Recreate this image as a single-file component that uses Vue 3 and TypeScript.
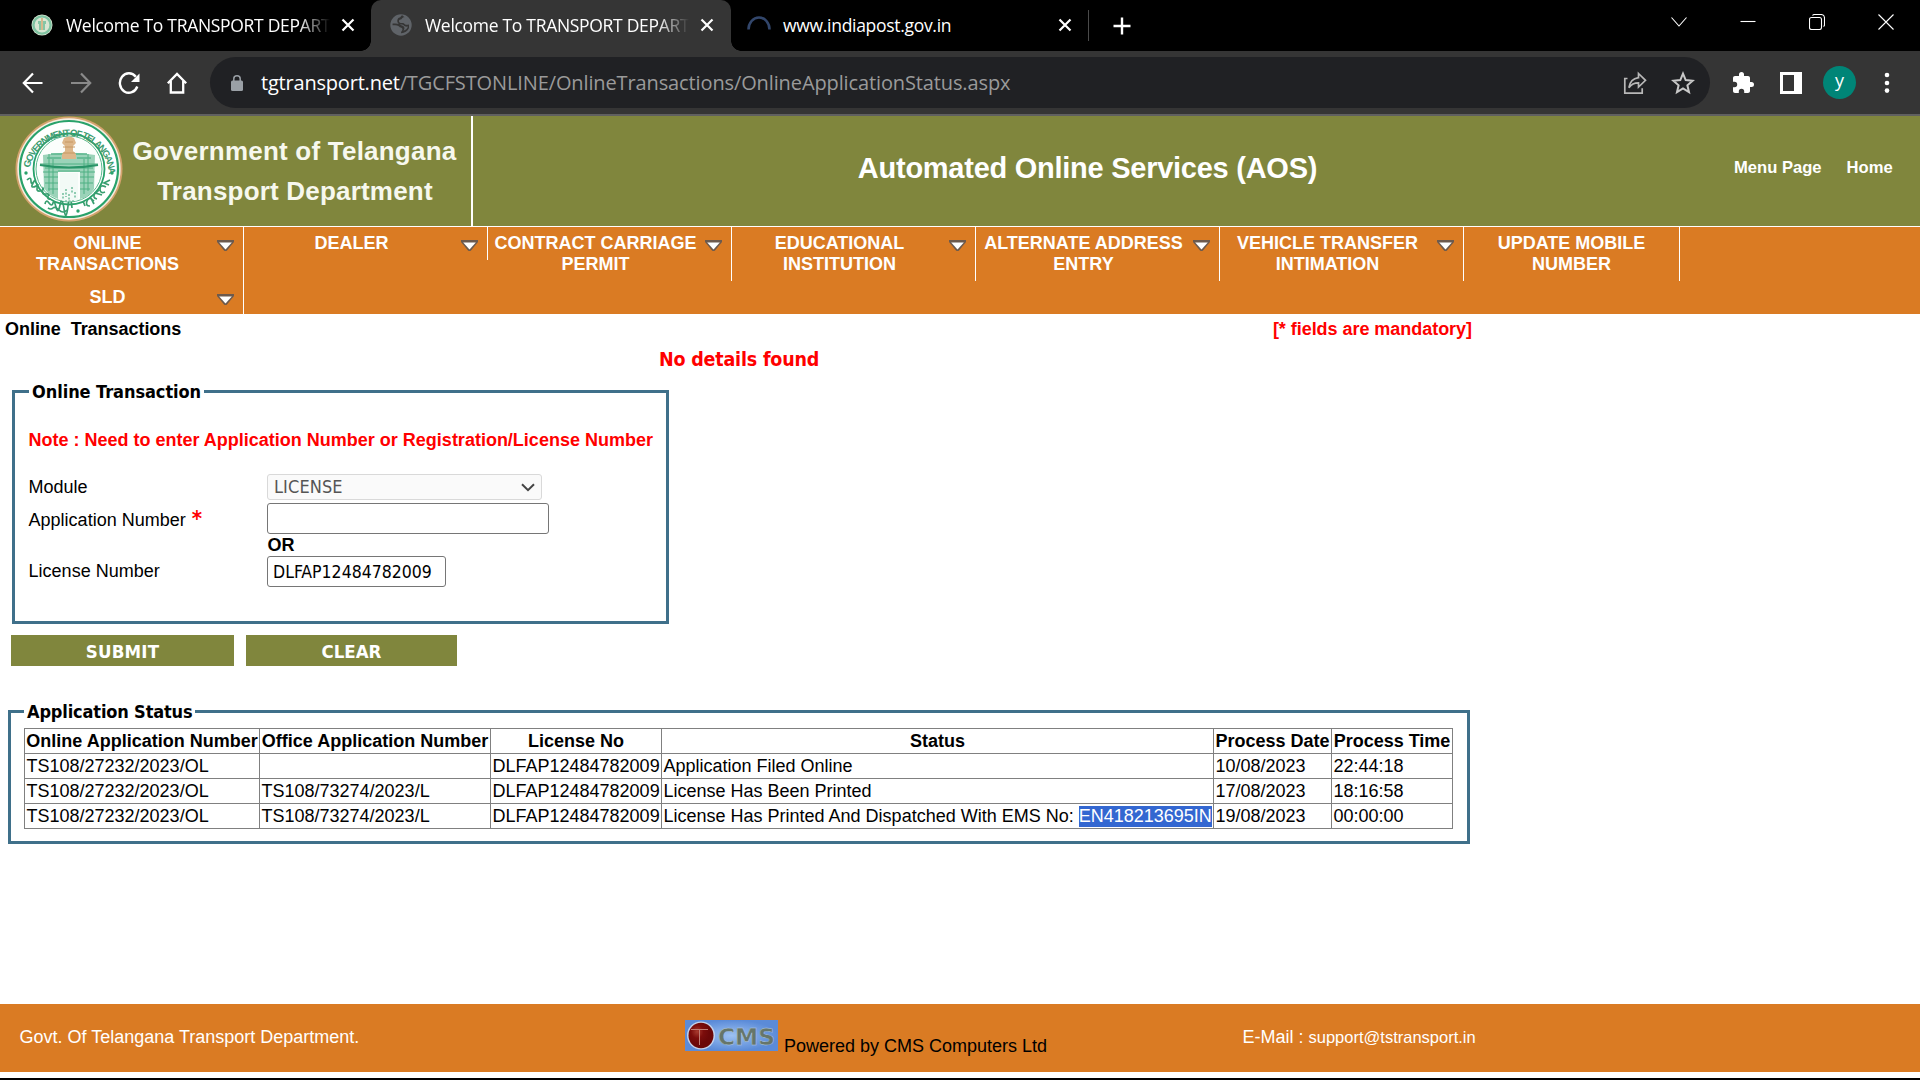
<script setup lang="ts">
import { ref } from 'vue'

interface MenuItem {
  lines: string[]
  arrow: boolean
  short?: boolean
}

interface StatusRow {
  online: string
  office: string
  license: string
  status: string
  marked?: string
  date: string
  time: string
}

const menuColumns: MenuItem[][] = [
  [
    { lines: ['ONLINE', 'TRANSACTIONS'], arrow: true },
    { lines: ['SLD'], arrow: true, short: true },
  ],
  [{ lines: ['DEALER'], arrow: true, short: true }],
  [{ lines: ['CONTRACT CARRIAGE', 'PERMIT'], arrow: true }],
  [{ lines: ['EDUCATIONAL', 'INSTITUTION'], arrow: true }],
  [{ lines: ['ALTERNATE ADDRESS', 'ENTRY'], arrow: true }],
  [{ lines: ['VEHICLE TRANSFER', 'INTIMATION'], arrow: true }],
  [{ lines: ['UPDATE MOBILE', 'NUMBER'], arrow: false }],
]

const headings = [
  'Online Application Number',
  'Office Application Number',
  'License No',
  'Status',
  'Process Date',
  'Process Time',
]

const rows: StatusRow[] = [
  { online: 'TS108/27232/2023/OL', office: '', license: 'DLFAP12484782009', status: 'Application Filed Online', date: '10/08/2023', time: '22:44:18' },
  { online: 'TS108/27232/2023/OL', office: 'TS108/73274/2023/L', license: 'DLFAP12484782009', status: 'License Has Been Printed', date: '17/08/2023', time: '18:16:58' },
  { online: 'TS108/27232/2023/OL', office: 'TS108/73274/2023/L', license: 'DLFAP12484782009', status: 'License Has Printed And Dispatched With EMS No: ', marked: 'EN418213695IN', date: '19/08/2023', time: '00:00:00' },
]

const applicationNumber = ref('')
const licenseNumber = ref('DLFAP12484782009')
</script>

<template>
  <div class="screen">
    <header class="tabs">
      <div class="tab tab-first">
        <svg class="fav" viewBox="0 0 22 22">
          <circle cx="11" cy="11" r="10.5" fill="#d9e6d2" />
          <circle cx="11" cy="11" r="8.6" fill="none" stroke="#7fc3a2" stroke-width="2.4" />
          <path d="M7 7h8v3H7zM8 10h6v6H8z" fill="#84c6a5" />
          <path d="M11 4v12" stroke="#d6b98c" stroke-width="2" />
        </svg>
        <span class="tab-title faded">Welcome To TRANSPORT DEPART</span>
        <svg class="x" viewBox="0 0 14 14"><path d="M1.5 1.5l11 11M12.5 1.5l-11 11" /></svg>
      </div>
      <div class="tab tab-active">
        <svg class="fav" viewBox="0 0 22 22">
          <circle cx="11" cy="11" r="10.7" fill="#5f6368" />
          <path d="M14.500 3.200c-2.600 0-2.200 2.200-4.200 2.400-1.800.2-1.800 2.600-.3 3.200 1.800.6 3.400-.6 4.400 1 .8 1.400 2.600 1.200 4.600.6v3.600c-1.600 3.400-4 5.200-8 5.200-.4-1.800 2-2.600 1.400-4.400-.6-1.600-2.600-.8-3.400-2.200-.6-1.200-2.800-1.400-6.400-1.400-.2-2 .2-1.600.2-1.600 3.600 0 6 .2 7.400 1.200 1.200 1 3.800.8 4.200 3 .2 1.400-.6 2.200-1 3 2.400-.6 3.800-2.200 4.600-4.200-2.400.2-3.800-.4-4.600-1.600-1.200-.8-4 .2-5.400-1.800-1.400-2.200-.6-5 1.600-5.600 1.200-.4 1.200-1.800 2.600-2.400z" fill="#353535" />
        </svg>
        <span class="tab-title faded">Welcome To TRANSPORT DEPART</span>
        <svg class="x" viewBox="0 0 14 14"><path d="M1.5 1.5l11 11M12.5 1.5l-11 11" /></svg>
      </div>
      <div class="tab tab-last">
        <svg class="spinner" viewBox="0 0 24 24"><path d="M1.500 15.500a10.500 12 0 0 1 21 0" fill="none" stroke="#32466b" stroke-width="2.600" /></svg>
        <span class="tab-title host">www.indiapost.gov.in</span>
        <svg class="x" viewBox="0 0 14 14"><path d="M1.5 1.5l11 11M12.5 1.5l-11 11" /></svg>
      </div>
      <i class="tab-sep"></i>
      <svg class="plus" viewBox="0 0 18 18"><path d="M9 0.500v17M0.500 9h17" stroke="#fff" stroke-width="2.400" /></svg>
      <div class="win">
        <svg viewBox="0 0 16 16"><path d="M.5 3.500l7.500 8.500 7.500-8.500" /></svg>
        <svg viewBox="0 0 16 16"><path d="M.5 7.500h15" /></svg>
        <svg viewBox="0 0 16 16"><rect x=".5" y="3.500" width="12" height="12" rx="2" /><path d="M3.500 1.500q.5-1 2-1h6.500q3.500 0 3.500 3.500v7q0 1-1 1.500" /></svg>
        <svg viewBox="0 0 16 16"><path d="M.5.5l15 15M15.500.5l-15 15" /></svg>
      </div>
    </header>

    <div class="toolbar">
      <svg class="nav" viewBox="0 0 24 24"><path d="M21.500 12H3M12 2.500L2.800 12l9.200 9.500" fill="none" stroke="#fff" stroke-width="2.200" /></svg>
      <svg class="nav" viewBox="0 0 24 24"><path d="M2 12h18.500M12 2.500l9.200 9.500-9.200 9.500" fill="none" stroke="#8a8a8a" stroke-width="2.200" /></svg>
      <svg class="nav" viewBox="0 0 24 24"><path d="M20.300 15.500A9 9.800 0 1 1 18.800 5.700" fill="none" stroke="#fff" stroke-width="2.400" /><path d="M22.500 2.500v8.500h-8.500z" fill="#fff" /></svg>
      <svg class="nav" viewBox="0 0 24 24"><path d="M2.800 12.200L12 3l9.200 9.200M5.800 10v11.500h12.400V10" fill="none" stroke="#fff" stroke-width="2.300" /></svg>
      <div class="omnibox">
        <svg class="lock" viewBox="0 0 12 16"><rect x="0" y="5.500" width="12" height="10.500" rx="1.500" fill="#9aa0a6" /><path d="M2.800 6V3.800a3.200 3 0 0 1 6.400 0V6" fill="none" stroke="#9aa0a6" stroke-width="1.500" /></svg>
        <span class="url"><b>tgtransport.net</b>/TGCFSTONLINE/OnlineTransactions/OnlineApplicationStatus.aspx</span>
        <svg class="share" viewBox="0 0 24 24"><path d="M4.500 7.500H1.800v14.700h17.400v-5" fill="none" stroke="#b8b8b8" stroke-width="1.700" /><path d="M15.500 2.500l7 6.800-7 6.800v-4.200c-4.300 0-7.200 1.400-9.600 4.800 .8-5.300 4-9.200 9.600-10z" fill="none" stroke="#b8b8b8" stroke-width="1.700" /></svg>
        <svg class="star" viewBox="0 0 24 24"><path d="M12 2.600l2.700 6.500 7 .6-5.300 4.600 1.600 6.900L12 17.500l-6 3.700 1.600-6.900L2.300 9.700l7-.6z" fill="none" stroke="#c8c8c8" stroke-width="2" /></svg>
      </div>
      <svg class="ext puzzle" viewBox="0 0 24 24"><path fill="#fff" d="M20.500 11H19V7c0-1.100-.9-2-2-2h-4V3.500a2.500 2.500 0 0 0-5 0V5H4c-1.100 0-2 .9-2 2v3.800h1.500a2.700 2.700 0 0 1 0 5.400H2V20c0 1.100.9 2 2 2h3.800v-1.500a2.700 2.700 0 0 1 5.400 0V22H17c1.100 0 2-.9 2-2v-4h1.500a2.500 2.500 0 0 0 0-5z" /></svg>
      <svg class="ext panel" viewBox="0 0 22 22"><path fill="#fff" fill-rule="evenodd" d="M0 0h22v22H0zM3 3v16h11V3z" /></svg>
      <span class="avatar">y</span>
      <svg class="dots" viewBox="0 0 6 22"><circle cx="3" cy="3" r="2.300" /><circle cx="3" cy="11" r="2.300" /><circle cx="3" cy="18.600" r="2.300" /></svg>
    </div>

    <div class="banner">
      <div class="brand">
        <svg class="emblem" viewBox="0 0 108 106">
          <defs><path id="arc" d="M14 60a40 40 0 1 1 80 0" /></defs>
          <ellipse cx="54" cy="53" rx="53.500" ry="52.500" fill="#d4a26d" />
          <ellipse cx="54" cy="53" rx="51.700" ry="50.700" fill="#f5efe2" />
          <ellipse cx="54" cy="53" rx="49" ry="48" fill="#fff" stroke="#29a26b" stroke-width="2.200" />
          <circle cx="54" cy="53" r="35.500" fill="#fff" stroke="#29a26b" stroke-width="1.800" />
          <circle cx="54" cy="53" r="33" fill="#fbfefc" stroke="#5cba8f" stroke-width="1" />
          <text class="ring"><textPath href="#arc" textLength="116" startOffset="8">GOVERNMENT OF TELANGANA</textPath></text>
          <circle cx="11" cy="57" r="1.700" fill="#29a26b" /><circle cx="97" cy="57" r="1.700" fill="#29a26b" /><circle cx="63" cy="95" r="1.700" fill="#29a26b" />
          <g fill="none" stroke="#389e70" stroke-width="1.700">
            <path d="M12 64q4-4 4 1t4-1q-5 7-2 7t5-3q-3 8 2 7t3-3q-2 7 3 6t2 2q-1 4 3 3M30 88q1-5 4-1t4 0 3 4 4-2 4 4 4-3 4 2M33 92q3 2 5 0t6 2 8 0" />
            <path d="M95 64l-6 3 5 2M91 71q-6-3-6 2t5 3M87 79l-7-2q-3 5 2 6M79 85q-5-5-7 0t3 5M70 90l-2-5M84 74l-3 3M76 82l3 6" />
          </g>
          <path d="M28 39q26-5 52 0l-1 34q-6 9-14 10V56H43v27q-9-3-14-11z" fill="#9bd3b9" />
          <path d="M25 48h58M30 52h48M28 56h15M65 56h15M29 61h14M65 61h14M30 67h13M65 67h13M33 73h10M65 73h10M34 38v37M38 43v35M73 38v37M69 43v35M43 55h22" stroke="#4fb083" stroke-width="1" fill="none" />
          <path d="M25 49q29 5 58 0" stroke="#2a9468" stroke-width="2.200" fill="none" />
          <path d="M36 38h12M60 38h12M32 42h14M62 42h14" stroke="#5bb78d" stroke-width="1.500" fill="none" />
          <path d="M45 57h18v27q-9 3-18 0z" fill="#f2faf6" />
          <path d="M48 77v6M51 73v8M54 78v7M57 71v7M60 76v7M50 85h10" stroke="#4fae85" stroke-width="1.200" stroke-dasharray="2 1.500" />
          <path d="M49 22q5-3 10 0l2 5-3 3v5l3 3v5H47v-5l3-3v-5l-3-3z" fill="#ddb78a" />
          <path d="M48 31h12M48 37h12M50 26h8" stroke="#c69863" stroke-width="1" />
        </svg>
        <div class="brand-text">
          <span class="b1">Government of Telangana</span>
          <span class="b2">Transport Department</span>
        </div>
      </div>
      <h1>Automated Online Services (AOS)</h1>
      <nav class="links"><a>Menu Page</a><a>Home</a></nav>
    </div>

    <nav class="menu">
      <div v-for="(column, c) in menuColumns" :key="c" class="menu-col" :class="{ last: c === 6 }">
        <div v-for="item in column" :key="item.lines[0]" class="menu-item" :class="{ short: item.short }">
          <span class="menu-label"><span v-for="line in item.lines" :key="line">{{ line }}</span></span>
          <svg v-if="item.arrow" class="arrow" viewBox="0 0 17 11">
            <path d="M0 0h17v2l-7 8.500q-1.500 1-3 0L0 2z" fill="#6d5a4d" />
            <path d="M2.200 2.600h12.600L8.500 9.600z" fill="#fff" />
          </svg>
        </div>
      </div>
    </nav>

    <main>
      <div class="crumb"><b>Online&nbsp; Transactions</b><b class="red">[* fields are mandatory]</b></div>
      <div class="message">No details found</div>

      <fieldset class="form">
        <legend>Online Transaction</legend>
        <p class="note">Note : Need to enter Application Number or Registration/License Number</p>
        <div class="row module">
          <label>Module</label>
          <div class="select"><span>LICENSE</span><svg viewBox="0 0 14 9"><path d="M1 1.200l6 6 6-6" /></svg></div>
        </div>
        <div class="row app">
          <label>Application Number <b class="req">*</b></label>
          <input v-model="applicationNumber" class="wide" type="text" />
        </div>
        <div class="row or"><span></span><b>OR</b></div>
        <div class="row lic">
          <label>License Number</label>
          <input v-model="licenseNumber" class="narrow" type="text" />
        </div>
      </fieldset>

      <div class="actions"><button class="submit">SUBMIT</button><button class="clear">CLEAR</button></div>

      <fieldset class="status">
        <legend>Application Status</legend>
        <table>
          <colgroup><col class="c1" /><col class="c2" /><col class="c3" /><col class="c4" /><col class="c5" /><col class="c6" /></colgroup>
          <thead><tr><th v-for="h in headings" :key="h">{{ h }}</th></tr></thead>
          <tbody>
            <tr v-for="(r, i) in rows" :key="i">
              <td>{{ r.online }}</td>
              <td>{{ r.office }}</td>
              <td>{{ r.license }}</td>
              <td>{{ r.status }}<mark v-if="r.marked">{{ r.marked }}</mark></td>
              <td>{{ r.date }}</td>
              <td>{{ r.time }}</td>
            </tr>
          </tbody>
        </table>
      </fieldset>
    </main>

    <footer>
      <span class="govt">Govt. Of Telangana Transport Department.</span>
      <span class="powered">
        <svg class="cms" viewBox="0 0 93 31">
          <defs>
            <radialGradient id="sky"><stop offset="0" stop-color="#9cc1f2" /><stop offset="1" stop-color="#5b8bd8" /></radialGradient>
            <radialGradient id="ball" cx=".35" cy=".35"><stop offset="0" stop-color="#a83a2e" /><stop offset=".5" stop-color="#7c0d0b" /><stop offset="1" stop-color="#6b0808" /></radialGradient>
          </defs>
          <rect width="93" height="31" fill="url(#sky)" />
          <ellipse cx="16" cy="15.500" rx="14" ry="14" fill="#c3d2ea" />
          <ellipse cx="16" cy="15.500" rx="12.500" ry="12.800" fill="url(#ball)" />
          <path d="M6 9.500h17M14.500 10v15" stroke="#c07d75" stroke-width="1" />
          <text x="33" y="24.500" textLength="57" lengthAdjust="spacingAndGlyphs">CMS</text>
        </svg>
        <span class="pw">Powered by CMS Computers Ltd</span>
      </span>
      <span class="mail">E-Mail : <a>support@tstransport.in</a></span>
    </footer>
    <div class="edge"></div>
  </div>
</template>

<style>
body { margin: 0; background: #fff; overflow: hidden; }
</style>

<style scoped>
* { box-sizing: border-box; }
.screen {
  width: 1920px; height: 1080px; display: flex; flex-direction: column; overflow: hidden;
  font: 18px/21px "Liberation Sans", Arial, sans-serif; color: #000; background: #fff; white-space: nowrap;
}
svg { display: block; flex: none; }

.tabs { height: 51px; flex: none; background: #000; display: flex; align-items: center; color: #fff; }
.tab { height: 51px; display: flex; align-items: center; position: relative; flex: none; }
.tab-first { width: 371px; padding-left: 31px; }
.tab-active { width: 360px; padding-left: 19px; background: #353535; border-radius: 10px 10px 0 0; }
.tab-active::before, .tab-active::after { content: ""; position: absolute; bottom: 0; width: 10px; height: 10px; }
.tab-active::before { left: -10px; background: radial-gradient(circle at 0 0, transparent 9.5px, #353535 10px); }
.tab-active::after { right: -10px; background: radial-gradient(circle at 100% 0, transparent 9.5px, #353535 10px); }
.tab-last { width: 358px; padding-left: 16px; }
.fav { width: 22px; height: 22px; margin-top: -1px; }
.spinner { width: 24px; height: 24px; margin-top: 0; }
.tab-title { margin-left: 13px; width: 264px; margin-top: -1px; font: 17.5px/24px "Open Sans", sans-serif; letter-spacing: -0.3px; }
.tab-last .tab-title { margin-left: 12px; }
.faded { -webkit-mask-image: linear-gradient(90deg, #000 232px, transparent 264px); mask-image: linear-gradient(90deg, #000 232px, transparent 264px); }
.x { width: 14px; height: 14px; margin-left: 11px; margin-top: -1px; fill: none; stroke: #fff; stroke-width: 2.2; }
.tab-sep { width: 1px; height: 31px; background: #4a4a4a; margin-left: -1px; }
.plus { width: 18px; height: 18px; margin-left: 24px; }
.win { display: flex; gap: 53px; margin-left: auto; margin-right: 26px; margin-top: -8px; }
.win svg { width: 16px; height: 16px; fill: none; stroke: #fff; stroke-width: 1.1; }

.toolbar { height: 65px; flex: none; background: #353535; border-bottom: 2px solid #606060; display: flex; align-items: center; padding: 0 0 0 21px; }
.nav { width: 24px; height: 24px; margin-right: 24px; }
.omnibox { width: 1500px; height: 51px; margin-left: -3px; border-radius: 26px; background: #202124; display: flex; align-items: center; padding-left: 21px; }
.lock { width: 12px; height: 16px; margin-top: 1px; }
.url { width: 1370px; margin-left: 18px; font: 20px/28px "Open Sans", sans-serif; color: #9a9a9a; letter-spacing: -0.12px; }
.url b { font-weight: 400; color: #fff; letter-spacing: -0.2px; }
.share { width: 24px; height: 24px; margin-left: -8px; }
.star { width: 24px; height: 24px; margin-left: 24px; }
.ext { width: 22px; height: 22px; margin-left: 25px; }
.puzzle { width: 24px; height: 24px; margin-left: 21px; }
.avatar { width: 33px; height: 33px; border-radius: 50%; background: #008577; color: #fff; text-align: center; font: 18px/29px "Open Sans", sans-serif; margin-left: 21px; }
.dots { width: 6px; height: 22px; margin-left: 28px; fill: #fff; }

.banner { height: 110px; flex: none; background: #80863d; color: #fff; display: flex; align-items: center; }
.brand { width: 473px; height: 110px; border-right: 2px solid #fff; display: flex; padding-left: 15px; }
.emblem { width: 108px; height: 106px; margin-top: 0; }
.ring { font: bold 9.500px "Liberation Sans", sans-serif; fill: #3d9c70; }
.brand-text { width: 323px; margin: 15px 0 0 10px; display: flex; flex-direction: column; align-items: center; font: bold 26px/41px "Liberation Sans", sans-serif; color: #f7f8ee; }
.b1 { letter-spacing: 0.22px; }
.b2 { letter-spacing: 0.2px; margin-left: 1px; margin-top: -1px; }
h1 { width: 1229px; margin: -6px 0 0; text-align: center; font: bold 29px/36px "Liberation Sans", sans-serif; letter-spacing: -0.26px; }
.links { margin: -8px 0 0 32px; display: flex; gap: 25px; font-size: 16.600px; font-weight: bold; }

.menu { height: 88px; flex: none; border-top: 1px solid #fff; background: #da7b23; display: flex; }
.menu-col { width: 244px; }
.menu-item { height: 54px; border-right: 1px solid #fff; display: flex; padding-top: 6px; }
.menu-item.short { height: 33px; }
.menu-label { width: 215px; display: flex; flex-direction: column; align-items: center; color: #fff; font-weight: bold; }
.arrow { width: 17px; height: 11px; margin: 7px 0 0 2px; }
.last { width: 216px; }

main { height: 690px; flex: none; padding-top: 5px; }
.crumb { width: 1472px; padding-left: 5px; display: flex; justify-content: space-between; letter-spacing: -0.04px; }
.red, .note, .req { color: #f00; }
.message { margin-left: 659px; margin-top: 8px; height: 24px; color: #f00; font: bold 19.500px/24px "DejaVu Sans Condensed", sans-serif; letter-spacing: -0.2px; }
fieldset { border: 3px solid #3f708a; margin: 0; padding: 0; }
legend { margin: 0 0 0 14px; padding: 0 3px; font: bold 18px/21px "DejaVu Sans Condensed", sans-serif; letter-spacing: -0.06px; }
.form { width: 657px; height: 243px; margin: 9px 0 0 12px; }
.note { margin: 28px 0 23px 13.500px; font-weight: bold; }
.row { display: flex; align-items: center; margin-left: 13px; }
.row > :first-child { width: 239px; flex: none; }
.row label { padding-left: 0.6px; }
.module { height: 26px; }
.select { width: 275px; height: 26px; border: 1px solid #d9d9d9; border-radius: 3px; background: #fafafa; color: #555; display: flex; align-items: center; justify-content: space-between; padding: 0 6px; font: 18px/24px "DejaVu Sans Condensed", sans-serif; letter-spacing: 0.1px; }
.select svg { width: 14px; height: 9px; fill: none; stroke: #444; stroke-width: 2; }
.app { height: 31px; margin-top: 3px; }
.app label { padding-top: 4px; }
.req { font: bold 22px/16px "DejaVu Sans Condensed", sans-serif; margin-left: 1px; }
input { height: 31px; margin: 0; border: 1px solid #767676; border-radius: 3px; background: #fff; color: #000; outline: none; padding: 1px 5px 0; font: 17.500px/28px "DejaVu Sans Condensed", sans-serif; }
.wide { width: 282px; }
.narrow { width: 179px; }
.or { height: 22px; }
.or b { padding-left: 0.6px; }
.lic { height: 31px; }
.actions { display: flex; gap: 12px; margin: 11px 0 0 11px; }
button { height: 31px; border: 0; padding: 1px 0 0; background: #80863d; color: #fff; font: bold 18.500px/31px "DejaVu Sans Condensed", sans-serif; }
.submit { width: 223px; letter-spacing: 0.2px; }
.clear { width: 211px; }
.status { width: 1462px; height: 143px; margin: 35px 0 0 8px; }
.status legend { margin-left: 13px; letter-spacing: -0.15px; }
table { margin: 6px 0 0 13px; width: 1429px; table-layout: fixed; border-collapse: collapse; }
.c1 { width: 235px; } .c2 { width: 231px; } .c3 { width: 171px; } .c4 { width: 552px; } .c5 { width: 118px; } .c6 { width: 121px; }
th, td { height: 25px; border: 1px solid #808080; padding: 0 0 0 1.500px; text-align: left; line-height: 21px; overflow: visible; }
th { text-align: center; padding: 0; }
mark { display: inline-block; height: 21px; background: #3367d1; color: #fff; }

footer { height: 68px; flex: none; background: #da7b23; display: flex; color: #fff; }
.govt { width: 666px; padding: 23px 0 0 19.500px; }
.powered { width: 557px; padding: 16px 0 0 19px; display: flex; gap: 6px; color: #000; }
.cms { width: 93px; height: 31px; overflow: visible; }
.cms text { font: bold 23px "DejaVu Sans", sans-serif; fill: #66766a; stroke: #b5cbe2; stroke-width: 0.4px; }
.pw { padding-top: 16px; }
.mail { padding: 23px 0 0 19.500px; }
.mail a { font-size: 16.500px; }
.edge { height: 8px; flex: none; background: #fff; border-bottom: 2px solid #000; }
</style>
